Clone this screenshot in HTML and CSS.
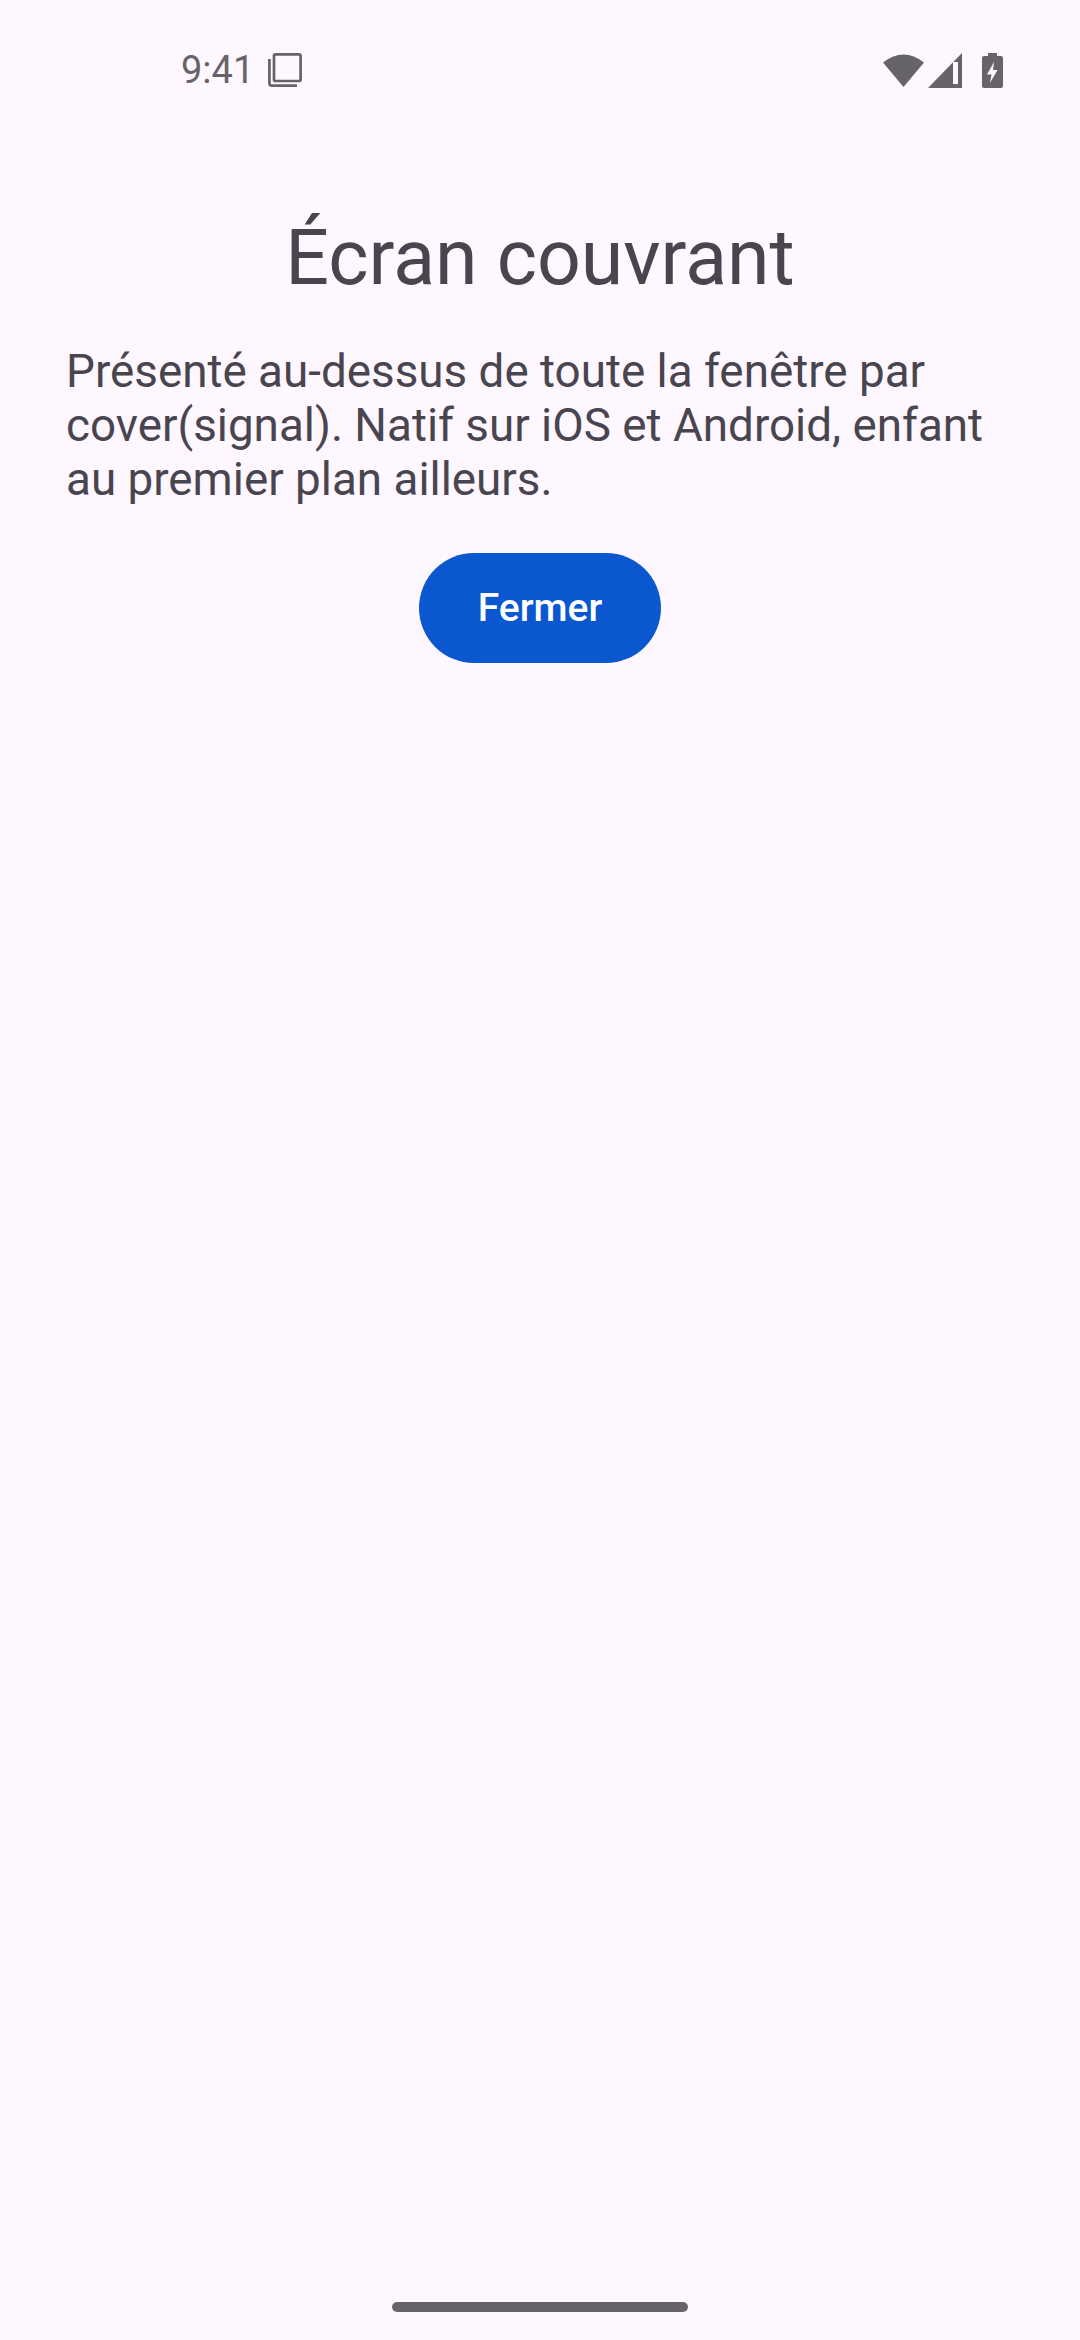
FILE: index.html
```html
<!DOCTYPE html>
<html lang="fr">
<head>
  <meta charset="UTF-8">
  <title>Écran couvrant</title>
  <link rel="stylesheet" href="styles.css">
</head>
<body>

  <div class="status-bar">
    <div class="status-left">
      <span class="clock">9:41</span>
      <svg class="icon-copies" width="34" height="34" viewBox="0 0 34 34" fill="none" stroke="#666468" stroke-width="2.700">
        <rect x="6" y="1.400" width="26.600" height="26.600" rx="1.500"/>
        <path d="M1.400 6V30q0 2.600 2.600 2.600H29"/>
      </svg>
    </div>
    <div class="status-right">
      <svg class="icon-wifi" width="41" height="34" viewBox="0 0 41 34" fill="#666468">
        <path d="M0 9.500Q20.500 -6.500 41 9.500L20.500 34z"/>
      </svg>
      <svg class="icon-signal" width="34" height="35" viewBox="0 0 34 35">
        <path fill="#666468" d="M34 0V35H0z"/>
        <rect fill="#fef7ff" x="25" y="9" width="5" height="22"/>
      </svg>
      <svg class="icon-battery" width="21" height="35" viewBox="0 0 21 35">
        <path fill="#666468" d="M6 0H15V3H19Q21 3 21 5V33Q21 35 19 35H2Q0 35 0 33V5Q0 3 2 3H6z"/>
        <path fill="#fef7ff" d="M12 9L5 21.500H9.500L8 30L15.500 17H11z"/>
      </svg>
    </div>
  </div>

  <main class="content">
    <h1 class="title">Écran couvrant</h1>
    <p class="desc">Présenté au-dessus de toute la fenêtre par cover(signal). Natif sur iOS et Android, enfant au premier plan ailleurs.</p>
    <button class="btn-close">Fermer</button>
  </main>

  <div class="nav-bar">
    <div class="nav-handle"></div>
  </div>

</body>
</html>
```
FILE: styles.css
```css
html, body {
  height: 100%;
  margin: 0;
  padding: 0;
}

body {
  display: flex;
  flex-direction: column;
  font-family: Roboto, "Noto Sans", sans-serif;
  background-color: #fef7ff;
  color: #49454f;
  overflow: hidden;
}

.status-bar {
  height: 50px;
  padding: 48px 77px 0 181px;
  display: flex;
  justify-content: space-between;
  align-items: flex-start;
  flex-shrink: 0;
}

.status-left {
  display: flex;
  align-items: center;
  gap: 14px;
  height: 44px;
}

.clock {
  font-size: 38px;
  color: #666468;
}

.status-right {
  display: flex;
  align-items: center;
  gap: 4px;
  height: 44px;
}

.icon-battery {
  margin-left: 16px;
}

.content {
  flex: 1;
  padding: 0 66px;
  display: flex;
  flex-direction: column;
  align-items: center;
}

.title {
  margin: 110px 0 0;
  font-size: 77px;
  font-weight: 400;
  line-height: 100px;
  text-align: center;
}

.desc {
  margin: 37px 0 0;
  width: 100%;
  font-size: 45.800px;
  line-height: 54px;
}

.btn-close {
  margin-top: 46px;
  width: 242px;
  height: 110px;
  border: none;
  border-radius: 55px;
  background-color: #0b57d0;
  color: #fff;
  font-family: inherit;
  font-size: 39px;
  font-weight: 500;
  cursor: pointer;
}

.nav-bar {
  height: 56px;
  display: flex;
  justify-content: center;
  flex-shrink: 0;
}

.nav-handle {
  margin-top: 18px;
  width: 296px;
  height: 10px;
  border-radius: 5px;
  background-color: #666468;
}
```
